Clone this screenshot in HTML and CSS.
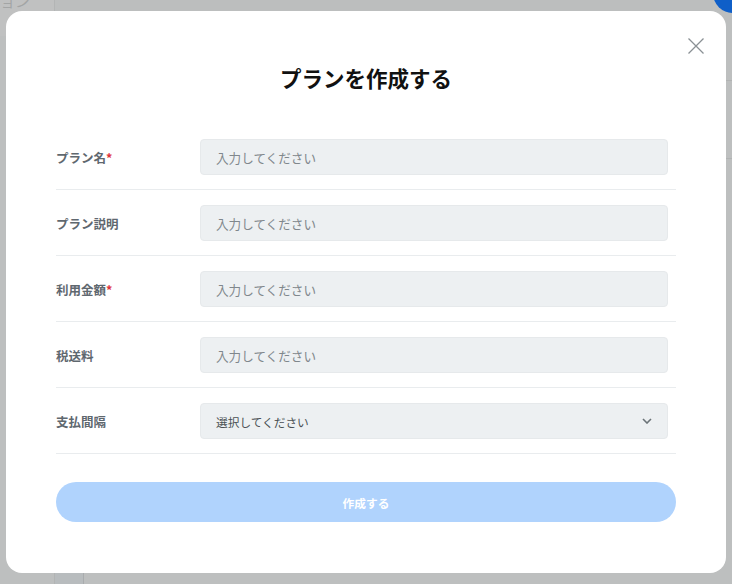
FILE: index.html
```html
<!DOCTYPE html>
<html lang="ja">
<head>
<meta charset="utf-8">
<title>プランを作成する</title>
<link rel="stylesheet" href="styles.css">
</head>
<body>
<div class="app">
  <div class="app-top">
    <div class="app-brand">ョン</div>
    <div class="app-topbar"></div>
    <div class="app-avatar"></div>
  </div>
  <div class="app-main">
    <div class="app-side"></div>
    <div class="app-col"></div>
    <div class="app-content">
      <div class="app-line l1"></div>
      <div class="app-line l2"></div>
    </div>
  </div>
</div>
<div class="overlay">
  <div class="modal">
    <button class="close" aria-label="閉じる">
      <svg width="16" height="16" viewBox="0 0 16 16"><path d="M0.5 0.5 L15.5 15.5 M15.5 0.5 L0.5 15.5" stroke="#8a9094" stroke-width="1.3" fill="none"/></svg>
    </button>
    <h1 class="title">プランを作成する</h1>
    <div class="form">
      <div class="row">
        <label class="label">プラン名<span class="req">*</span></label>
        <div class="field"><input class="input" placeholder="入力してください"></div>
      </div>
      <div class="row">
        <label class="label">プラン説明</label>
        <div class="field"><input class="input" placeholder="入力してください"></div>
      </div>
      <div class="row">
        <label class="label">利用金額<span class="req">*</span></label>
        <div class="field"><input class="input" placeholder="入力してください"></div>
      </div>
      <div class="row">
        <label class="label">税送料</label>
        <div class="field"><input class="input" placeholder="入力してください"></div>
      </div>
      <div class="row">
        <label class="label">支払間隔</label>
        <div class="field">
          <div class="select">
            <span>選択してください</span>
            <svg width="10" height="6" viewBox="0 0 10 6"><path d="M1 1 L5 5 L9 1" stroke="#6b7378" stroke-width="1.6" fill="none"/></svg>
          </div>
        </div>
      </div>
    </div>
    <button class="submit">作成する</button>
  </div>
</div>
</body>
</html>
```
FILE: styles.css
```css
* { box-sizing: border-box; }
html, body { margin: 0; padding: 0; }
body {
  width: 732px;
  height: 584px;
  overflow: hidden;
  font-family: "Noto Sans CJK JP", "Noto Sans", sans-serif;
  background: #bdbfbf;
  position: relative;
}
.app { width: 732px; height: 584px; display: flex; flex-direction: column; }
.app-top { height: 36px; display: flex; }
.app-brand {
  width: 55px; color: #a3a5a5; font-size: 15px; line-height: 1;
  margin-top: -7px; padding-left: 0; background: #c0c1c1;
  border-right: 1px solid #b3b5b5;
}
.app-topbar { flex: 1; background: #bcbebe; border-bottom: 1px solid #b0b2b2; }
.app-avatar {
  width: 40px; height: 40px; border-radius: 50%; background: #0f5fc8;
  margin-top: -27px; margin-right: -21px;
}
.app-main { flex: 1; display: flex; }
.app-side { width: 55px; background: #bdbfbf; border-right: 1px solid #b2b4b4; }
.app-col { width: 29px; background: #b8bcbe; border-right: 1px solid #a9acae; }
.app-content { flex: 1; background: #bdbfbf; }
.app-line { height: 1px; background: #b1b3b3; }
.app-line.l1 { margin-top: 44px; }
.app-line.l2 { margin-top: 77px; }

.overlay {
  position: absolute; inset: 0;
  display: flex; justify-content: center; align-items: flex-start;
  padding-top: 11px;
}
.modal {
  position: relative;
  width: 720px; height: 562px;
  background: #ffffff;
  border-radius: 16px;
  padding: 51px 50px 51px;
  display: flex; flex-direction: column;
}
.close {
  position: absolute; top: 27px; right: 22px;
  width: 16px; height: 16px; padding: 0; border: 0; background: none;
  display: flex;
}
.title {
  margin: 0 0 30px;
  font-size: 21.5px; line-height: 32px; font-weight: 700;
  text-align: center; color: #111;
}
.form { display: flex; flex-direction: column; }
.row {
  display: flex; align-items: center;
  padding: 15px 8px 14px 0;
  border-bottom: 1px solid #e9ecee;
}
.label {
  width: 144px; flex: none;
  font-size: 12.5px; font-weight: 700; color: #5f686f;
}
.req { color: #e0353f; }
.field { flex: 1; }
.input, .select {
  width: 100%; height: 36px;
  background: #edf0f2;
  border: 1px solid #e6e9eb;
  border-radius: 4px;
  padding: 0 15px;
  font-family: inherit;
  font-size: 12.6px; color: #333;
  outline: none;
}
.input::placeholder { color: #80878c; }
.select {
  display: flex; align-items: center; justify-content: space-between;
  color: #4a5054; font-size: 11.7px;
  padding-right: 15px;
}
.submit {
  margin-top: 28px;
  height: 40px; width: 100%;
  border: 0; border-radius: 20px;
  background: #b0d3fd;
  color: #ffffff;
  font-family: inherit; font-size: 11.7px; font-weight: 700;
}
```
